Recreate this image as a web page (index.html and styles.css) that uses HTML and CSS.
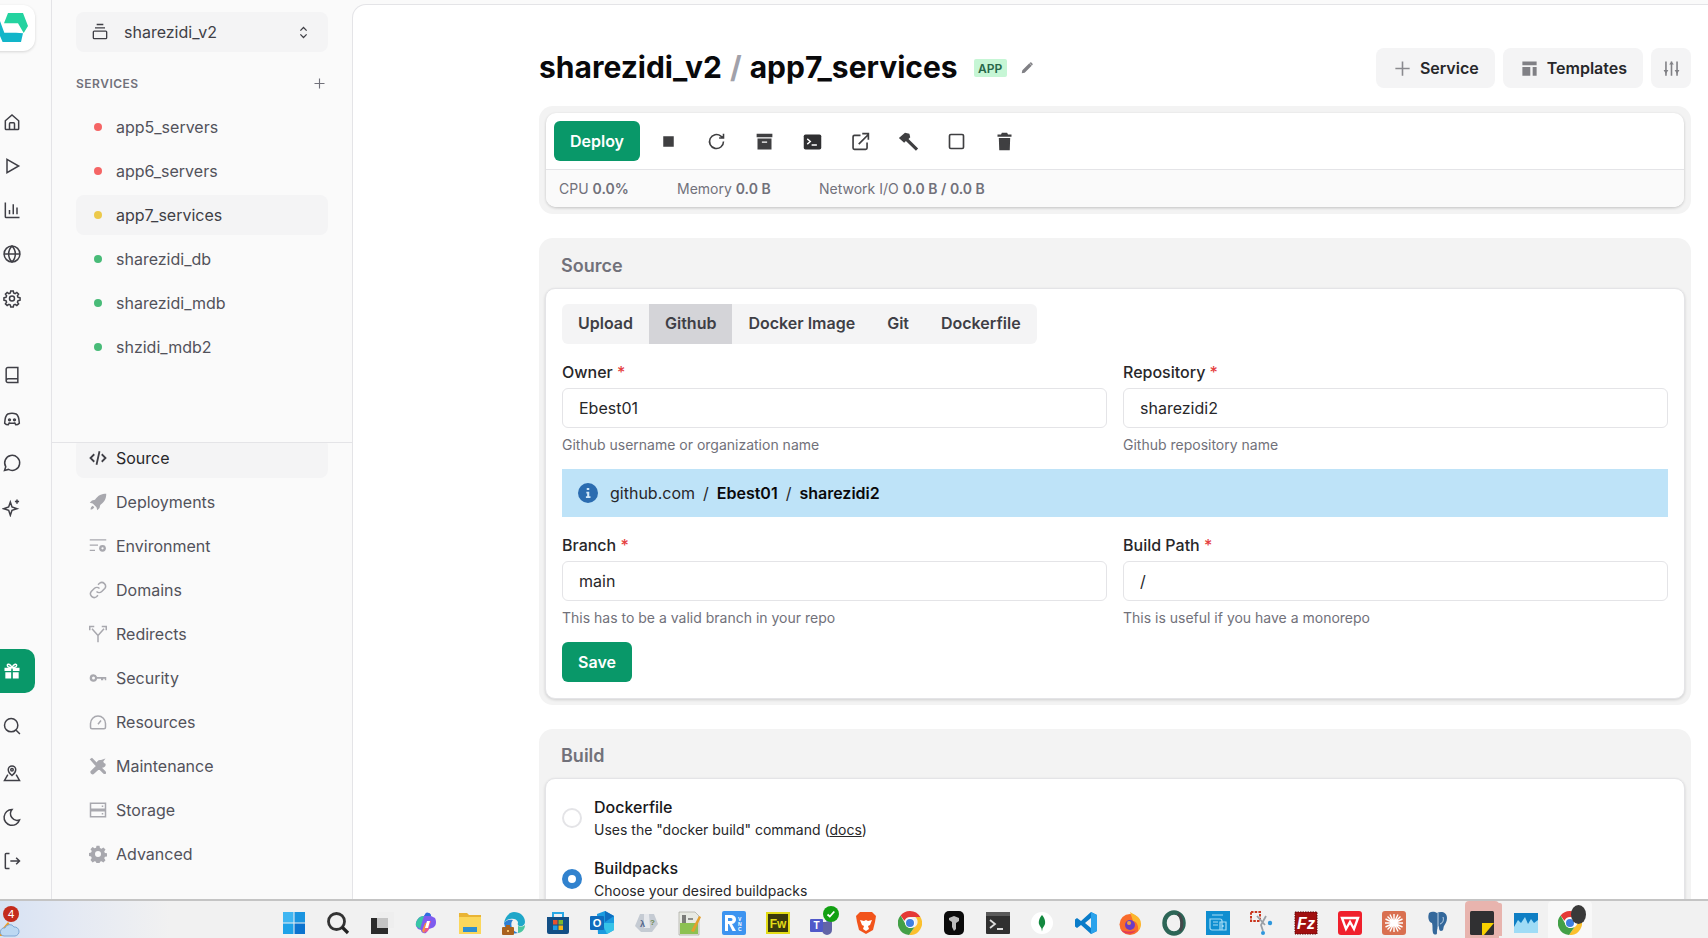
FILE: index.html
```html
<!DOCTYPE html>
<html lang="en">
<head>
    <meta charset="UTF-8">
    <meta name="viewport" content="width=device-width, initial-scale=1.0">
    <title>app7_services</title>
    <link rel="stylesheet" href="styles.css">
</head>
<body>
    <svg class="defs" width="0" height="0">
        <symbol id="chrome" viewBox="0 0 24 24">
            <path d="M12 0a12 12 0 0 1 10.4 6H12a6 6 0 0 0-5.6 3.8L2.6 4.4A12 12 0 0 1 12 0z" fill="#e53935"/>
            <path d="M22.4 6A12 12 0 0 1 11 24l5.6-8a6 6 0 0 0 .6-10z" fill="#fbc02d"/>
            <path d="M2.6 4.4l5.2 9.4a6 6 0 0 0 8.800 2.200L11 24A12 12 0 0 1 2.600 4.400z" fill="#43a047"/>
            <circle cx="12" cy="12" r="5" fill="#fff"/>
            <circle cx="12" cy="12" r="4" fill="#3f7fe0"/>
        </symbol>
    </svg>
    <div class="shell">
        <nav class="rail">
            <div class="logo">
                <svg width="33" height="30" viewBox="0 0 33 30">
                    <path d="M13 0h15l5 13-4.300 7L23 10.300H9z" fill="#24d3a0"/>
                    <path d="M1 14l4-6 4.300 11.700H21l7 .6L26 29H7.600z" fill="#12b5c9"/>
                </svg>
            </div>
            <div class="rail-group">
                <span class="rail-icon"><svg viewBox="0 0 24 24"><path d="M4 10.500 12 3.500l8 7V20a1 1 0 0 1-1 1H5a1 1 0 0 1-1-1z"/><path d="M9 21v-7a1 1 0 0 1 1-1h4a1 1 0 0 1 1 1v7"/></svg></span>
                <span class="rail-icon"><svg viewBox="0 0 24 24"><path d="M6 4l14 8-14 8z"/></svg></span>
                <span class="rail-icon"><svg viewBox="0 0 24 24"><path d="M4 3v17a1 1 0 0 0 1 1h16M9 17v-5M13.500 17V5M18 17V9"/></svg></span>
                <span class="rail-icon"><svg viewBox="0 0 24 24"><circle cx="12" cy="12" r="9.500"/><path d="M2.500 12h19M12 2.500c3 2.800 4 6 4 9.500s-1 6.700-4 9.500c-3-2.800-4-6-4-9.500s1-6.700 4-9.500z"/></svg></span>
                <span class="rail-icon"><svg viewBox="0 0 24 24"><path d="M10.500 3.500h3l.5 2.500 1.700.7 2.100-1.400 2.100 2.100-1.400 2.100.7 1.700 2.500.5v3l-2.500.5-.7 1.700 1.400 2.100-2.100 2.100-2.100-1.400-1.700.7-.5 2.500h-3l-.5-2.500-1.700-.7-2.100 1.400-2.100-2.100 1.400-2.100-.7-1.700-2.500-.5v-3l2.500-.5.700-1.700-1.400-2.100 2.100-2.100 2.100 1.400 1.700-.7z"/><circle cx="12" cy="12.500" r="3"/></svg></span>
            </div>
            <div class="rail-group rail-group-second">
                <span class="rail-icon"><svg viewBox="0 0 24 24"><path d="M5 19V5a2 2 0 0 1 2-2h12v18H7a2 2 0 0 1-2-2zm0 0a2.500 2.500 0 0 1 2-2.500h12"/></svg></span>
                <span class="rail-icon"><svg viewBox="0 0 24 24"><path d="M7 6c3-1.200 7-1.200 10 0 1.800 1 3.500 6 3.800 11-1 1.200-2.800 2-4.300 2l-1.200-2.300c-2.200.5-4.400.5-6.600 0L7.500 19c-1.500 0-3.300-.8-4.300-2C3.500 12 5.200 7 7 6z"/><circle cx="9" cy="13" r="1.100"/><circle cx="15" cy="13" r="1.100"/></svg></span>
                <span class="rail-icon"><svg viewBox="0 0 24 24"><path d="M3 21l1.500-4.500a9 9 0 1 1 3.300 3.200z"/></svg></span>
                <span class="rail-icon"><svg viewBox="0 0 24 24"><path d="M10 6l2 6 6 2-6 2-2 6-2-6-6-2 6-2z"/><path d="M18 3v5M15.500 5.500h5M4 20h.01"/></svg></span>
            </div>
            <span class="gift">
                <svg viewBox="0 0 24 24" width="20" height="20"><path d="M3 8h8v4H3zM13 8h8v4h-8zM4 13.500h7V21H4zM13 13.500h7V21h-7z" fill="#fff"/><path d="M12 8C10 3 6 3 6.500 5.500S10 8 12 8c2 0 5-.2 5.500-2.500S14 3 12 8z" fill="none" stroke="#fff" stroke-width="1.800"/></svg>
            </span>
            <span class="rail-icon rail-search"><svg viewBox="0 0 24 24"><circle cx="11" cy="11" r="8"/><path d="M17 17l4.500 4.500"/></svg></span>
            <span class="rail-icon rail-tight"><svg viewBox="0 0 24 24"><path d="M12 15c-3-2.500-4.500-4.500-4.500-7a4.500 4.500 0 0 1 9 0c0 2.500-1.500 4.500-4.500 7z"/><circle cx="12" cy="8" r="1.500"/><path d="M7 14l-4 7h18l-4-7"/></svg></span>
            <span class="rail-icon"><svg viewBox="0 0 24 24"><path d="M12 3a9.500 9.500 0 1 0 9 12.500A8 8 0 0 1 12 3z"/></svg></span>
            <span class="rail-icon"><svg viewBox="0 0 24 24"><path d="M9 3H5a1 1 0 0 0-1 1v16a1 1 0 0 0 1 1h4M10 12h11M17 8l4 4-4 4"/></svg></span>
        </nav>

        <aside class="sidebar">
            <div class="sidebar-top">
                <div class="project-select">
                    <svg class="select-icon" viewBox="0 0 24 24"><path d="M8 3h8M6 7h12M5 11h14a1 1 0 0 1 1 1v7a1 1 0 0 1-1 1H5a1 1 0 0 1-1-1v-7a1 1 0 0 1 1-1z"/></svg>
                    <span class="project-name">sharezidi_v2</span>
                    <svg class="select-chevrons" viewBox="0 0 24 24"><path d="M7 9l5-5 5 5M7 15l5 5 5-5"/></svg>
                </div>
                <div class="services-head">
                    <span>SERVICES</span>
                    <svg class="plus" viewBox="0 0 24 24"><path d="M12 4v16M4 12h16"/></svg>
                </div>
                <ul class="service-list">
                    <li class="side-row"><i class="dot dot-red"></i>app5_servers</li>
                    <li class="side-row"><i class="dot dot-red"></i>app6_servers</li>
                    <li class="side-row side-row-active"><i class="dot dot-yellow"></i>app7_services</li>
                    <li class="side-row"><i class="dot dot-green"></i>sharezidi_db</li>
                    <li class="side-row"><i class="dot dot-green"></i>sharezidi_mdb</li>
                    <li class="side-row"><i class="dot dot-green"></i>shzidi_mdb2</li>
                </ul>
            </div>
            <div class="sidebar-menu">
                <ul class="menu-list">
                    <li class="side-row side-row-active menu-source">
                        <svg class="menu-icon menu-icon-dark" viewBox="0 0 24 24"><path d="M7 7l-5 5 5 5M17 7l5 5-5 5M14 3l-4 18" fill="none" stroke="#3f3f46" stroke-width="2.400"/></svg>Source
                    </li>
                    <li class="side-row">
                        <svg class="menu-icon" viewBox="0 0 24 24"><path d="M23 1c-6 0-11 2-15 8l-4 1-3 3 4 1 5 5 1 4 3-3 1-4c6-4 8-9 8-15zM5 17c-2 1-3 3-3 5 2 0 4-1 5-3z"/></svg>Deployments
                    </li>
                    <li class="side-row">
                        <svg class="menu-icon" viewBox="0 0 24 24"><path d="M1 3h22v1.500H1zM1 10h11v1.500H1zM1 17h7v1.500H1z"/><circle cx="18" cy="15" r="4.500"/><circle cx="18" cy="15" r="1.500" fill="#fafafa"/></svg>Environment
                    </li>
                    <li class="side-row">
                        <svg class="menu-icon menu-icon-line" viewBox="0 0 24 24"><path d="M10 14a5 5 0 0 0 7 0l4-4a5 5 0 0 0-7-7l-2 2M14 10a5 5 0 0 0-7 0l-4 4a5 5 0 0 0 7 7l2-2"/></svg>Domains
                    </li>
                    <li class="side-row">
                        <svg class="menu-icon menu-icon-line" viewBox="0 0 24 24"><path d="M12 23v-9L4 5M12 14l8-9M1 7V2h6M17 2h6v5"/></svg>Redirects
                    </li>
                    <li class="side-row">
                        <svg class="menu-icon" viewBox="0 0 24 24"><path d="M6 7a5 5 0 0 1 4.800 3.500H23V15h-2v-2h-2v2h-3v-2h-5.200A5 5 0 1 1 6 7zm0 3a2 2 0 1 0 0 4 2 2 0 0 0 0-4z"/></svg>Security
                    </li>
                    <li class="side-row">
                        <svg class="menu-icon menu-icon-line" viewBox="0 0 24 24"><path d="M4 21h16a2 2 0 0 0 2-2v-5a10 10 0 0 0-20 0v5a2 2 0 0 0 2 2zM12 15l4-5"/></svg>Resources
                    </li>
                    <li class="side-row">
                        <svg class="menu-icon" viewBox="0 0 24 24"><path d="M1 3l3-2 6 6 3 3 9 9c1 1 1 3 0 3.500s-2 .500-3-.500l-9-9-3-3zM22 2l-3 4 1 2 2 1c1 3-2 6-6 5L6 23c-2 1-5-2-4-4l8-8c-1-4 2-8 6-7z"/></svg>Maintenance
                    </li>
                    <li class="side-row">
                        <svg class="menu-icon menu-icon-line" viewBox="0 0 24 24"><path d="M2 3h20v8H2zM2 13h20v8H2zM17 7h2M17 17h2"/></svg>Storage
                    </li>
                    <li class="side-row">
                        <svg class="menu-icon" viewBox="0 0 24 24"><path fill-rule="evenodd" d="M10 1h4l.6 3 2 .9 2.600-1.700 2.800 2.800-1.700 2.600.9 2 3 .6v4l-3 .6-.9 2 1.700 2.600-2.800 2.800-2.600-1.700-2 .9-.6 3h-4l-.6-3-2-.9-2.600 1.700L2 19.900l1.700-2.600-.9-2-3-.6v-4l3-.6.9-2L2 5.500l2.800-2.800 2.600 1.700 2-.9zM12 8a4 4 0 1 0 0 8 4 4 0 0 0 0-8z"/></svg>Advanced
                    </li>
                </ul>
            </div>
        </aside>

        <main class="main">
            <header class="page-head">
                <h1 class="page-title">sharezidi_v2 <span class="slash">/</span> app7_services</h1>
                <span class="badge">APP</span>
                <svg class="pencil" viewBox="0 0 24 24"><path d="M3 21l1-5L16 4l4 4L8 20zM17.500 2.500a1.500 1.500 0 0 1 2 0l2 2a1.500 1.500 0 0 1 0 2l-1 1-4-4z"/></svg>
                <div class="head-actions">
                    <button class="soft-btn">
                        <svg class="soft-icon" viewBox="0 0 24 24"><path d="M12 3v18M3 12h18" fill="none" stroke="#8a8a8f" stroke-width="2"/></svg>Service
                    </button>
                    <button class="soft-btn">
                        <svg class="soft-icon" viewBox="0 0 24 24"><path d="M3 3h18v5H3zM3 10h10v11H3zM16 10h5v11h-5z" fill="#808085"/></svg>Templates
                    </button>
                    <button class="soft-btn soft-btn-square">
                        <svg class="soft-icon" viewBox="0 0 24 24"><path d="M5 3v18M12 3v18M19 3v18" fill="none" stroke="#808085" stroke-width="2"/><path d="M2 14h6l-3 5zM9 7h6l-3-4zM16 14h6l-3 5z" fill="#808085"/></svg>
                    </button>
                </div>
            </header>

            <section class="deploy-panel">
                <div class="deploy-inner">
                    <div class="deploy-bar">
                        <button class="green-btn deploy-btn">Deploy</button>
                        <span class="tool"><svg viewBox="0 0 24 24"><rect x="6" y="6" width="12" height="12" fill="#3f3f41"/></svg></span>
                        <span class="tool"><svg viewBox="0 0 24 24"><path d="M20 12a8 8 0 1 1-3-6.200L20 8M20 3v5h-5" fill="none" stroke="#3f3f41" stroke-width="1.800"/></svg></span>
                        <span class="tool"><svg viewBox="0 0 24 24"><path fill-rule="evenodd" d="M3 3h18v4H3zM4 8.500h16V21H4zM9 12v1.500h6V12z" fill="#3f3f41"/></svg></span>
                        <span class="tool"><svg viewBox="0 0 24 24"><rect x="2" y="4" width="20" height="17" rx="2" fill="#2f2f31"/><path d="M6 9l3.500 3L6 15M11 16h6" fill="none" stroke="#fff" stroke-width="1.600"/></svg></span>
                        <span class="tool"><svg viewBox="0 0 24 24"><path d="M12 5H5a1.500 1.500 0 0 0-1.500 1.500v13A1.500 1.500 0 0 0 5 21h13a1.500 1.500 0 0 0 1.500-1.500V13M10 15L21 4M14 3h7v7" fill="none" stroke="#3f3f41" stroke-width="1.900"/></svg></span>
                        <span class="tool"><svg viewBox="0 0 24 24"><path d="M1 8L8 2l5 1 1 4-2 2L23 20l-2.500 2.500L9 11.500l-2 2z" fill="#3f3f41"/></svg></span>
                        <span class="tool"><svg viewBox="0 0 24 24"><rect x="4" y="4" width="16" height="16" rx="1.500" fill="none" stroke="#3f3f41" stroke-width="1.900"/></svg></span>
                        <span class="tool"><svg viewBox="0 0 24 24"><path d="M9 2h6l1 2h4v2.500H4V4h4zM5.500 8h13L18 22H6z" fill="#3f3f41"/></svg></span>
                    </div>
                    <div class="stats">
                        <span class="stat stat-cpu">CPU <b>0.0%</b></span>
                        <span class="stat stat-mem">Memory <b>0.0 B</b></span>
                        <span class="stat">Network I/O <b>0.0 B / 0.0 B</b></span>
                    </div>
                </div>
            </section>

            <section class="panel">
                <h2 class="panel-title">Source</h2>
                <div class="panel-body">
                    <div class="tabs">
                        <span class="tab">Upload</span>
                        <span class="tab tab-active">Github</span>
                        <span class="tab">Docker Image</span>
                        <span class="tab">Git</span>
                        <span class="tab">Dockerfile</span>
                    </div>
                    <div class="form-grid">
                        <div class="field">
                            <label class="field-label">Owner <em>*</em></label>
                            <input class="field-input" type="text" value="Ebest01">
                            <p class="field-hint">Github username or organization name</p>
                        </div>
                        <div class="field">
                            <label class="field-label">Repository <em>*</em></label>
                            <input class="field-input" type="text" value="sharezidi2">
                            <p class="field-hint">Github repository name</p>
                        </div>
                    </div>
                    <div class="repo-banner">
                        <svg class="info-icon" viewBox="0 0 24 24"><circle cx="12" cy="12" r="12" fill="#2b6cb0"/><path d="M10.500 6h3v2.500h-3zM10 10.500h3.500V16H15v2H9.500v-2H11v-3.500h-1z" fill="#cfe6f8"/></svg>
                        <span>github.com</span><span class="sep">/</span><b>Ebest01</b><span class="sep">/</span><b>sharezidi2</b>
                    </div>
                    <div class="form-grid">
                        <div class="field">
                            <label class="field-label">Branch <em>*</em></label>
                            <input class="field-input" type="text" value="main">
                            <p class="field-hint">This has to be a valid branch in your repo</p>
                        </div>
                        <div class="field">
                            <label class="field-label">Build Path <em>*</em></label>
                            <input class="field-input" type="text" value="/">
                            <p class="field-hint">This is useful if you have a monorepo</p>
                        </div>
                    </div>
                    <button class="green-btn save-btn">Save</button>
                </div>
            </section>

            <section class="panel panel-build">
                <h2 class="panel-title">Build</h2>
                <div class="panel-body">
                    <div class="radio-row">
                        <span class="radio"></span>
                        <div>
                            <div class="radio-title">Dockerfile</div>
                            <div class="radio-desc">Uses the "docker build" command (<u>docs</u>)</div>
                        </div>
                    </div>
                    <div class="radio-row">
                        <span class="radio radio-on"></span>
                        <div>
                            <div class="radio-title">Buildpacks</div>
                            <div class="radio-desc">Choose your desired buildpacks</div>
                        </div>
                    </div>
                </div>
            </section>
        </main>
    </div>

    <footer class="taskbar">
        <div class="weather">
            <svg viewBox="0 0 24 24" width="24" height="24"><path d="M-4 22L8 8l3 4-7 10z" fill="#f29c1f"/><path d="M4 22a4 4 0 0 1 1-8 5 5 0 0 1 9-1 4.500 4.500 0 0 1 1 9z" fill="#bcd8f2" stroke="#7ea9d6"/></svg>
            <span class="weather-badge">4</span>
        </div>
        <div class="task-icons">
            <span class="task"><svg viewBox="0 0 24 24"><path d="M1 1h10.500v10.500H1z" fill="#3fb6f2"/><path d="M12.500 1H23v10.500H12.500z" fill="#1b95e0"/><path d="M1 12.500h10.500V23H1z" fill="#1ea2e8"/><path d="M12.500 12.500H23V23H12.500z" fill="#0c74cf"/></svg></span>
            <span class="task"><svg viewBox="0 0 24 24"><circle cx="10.500" cy="10.500" r="8" fill="none" stroke="#333" stroke-width="2.800"/><path d="M16 16l6 6" stroke="#222" stroke-width="3.200"/></svg></span>
            <span class="task"><svg viewBox="0 0 24 24"><rect x="1" y="7" width="17" height="16" fill="#2b2b2b"/><rect x="7" y="1" width="17" height="16" fill="#eeeeee"/><rect x="7" y="7" width="11" height="10" fill="#c4c4c4"/></svg></span>
            <span class="task"><svg viewBox="0 0 24 24"><path d="M2 15c-1-5 3-10 8-10l2-3c3-1 5 1 5 3l4 2c2 4 1 9-3 10l-3 1-3 4c-3 1-5-1-5-3l-3-1z" fill="#7e5bef"/><path d="M2 15c-1-5 3-10 8-10l-4 13z" fill="#38c6a5"/><path d="M12 2c3-1 5 1 5 3h-7z" fill="#2d6cdf"/><path d="M10 22l3-12h4l-3 10z" fill="#f0568d"/><path d="M8 20l3-8h2l-3 10z" fill="#f59342"/><path d="M13 10h3l-2 7h-3z" fill="#fff"/></svg></span>
            <span class="task"><svg viewBox="0 0 24 24"><path d="M1 2h8l2 2h12v19H1z" fill="#e9b435"/><path d="M1 6h22v17H1z" fill="#fbd75b"/><rect x="5" y="16" width="14" height="5" fill="#2e8ed0"/></svg></span>
            <span class="task"><svg viewBox="0 0 24 24"><path d="M12 1c6 0 11 4 11 10 0 3-3 5-6 4-2-1-1-3-1-4-1-3-5-4-8-3-3 0-5 3-6 4C3 6 7 1 12 1z" fill="#1fa7c9"/><path d="M2 12c2-3 6-4 9-3-2 2-2 5-1 8 1 2 3 4 6 5-7 2-13-3-14-10z" fill="#2d7fd3"/><path d="M16 15c2 1 5 1 7-1 0 4-3 8-7 8z" fill="#4bc6a0"/><rect x="0" y="16" width="12" height="8" rx="1" fill="#a9621f"/><rect x="4" y="14" width="4" height="2" fill="#a9621f"/><rect x="5" y="19" width="2" height="2" fill="#f6c26b"/></svg></span>
            <span class="task"><svg viewBox="0 0 24 24"><path d="M1 6h22v15a2 2 0 0 1-2 2H3a2 2 0 0 1-2-2z" fill="#134f85"/><path d="M7 6V2h10v4" fill="none" stroke="#29a9e6" stroke-width="2"/><rect x="7" y="9" width="4.500" height="4.500" fill="#e8512d"/><rect x="12.500" y="9" width="4.500" height="4.500" fill="#7cb82f"/><rect x="7" y="14.500" width="4.500" height="4.500" fill="#1c9be6"/><rect x="12.500" y="14.500" width="4.500" height="4.500" fill="#f7b614"/></svg></span>
            <span class="task"><svg viewBox="0 0 24 24"><path d="M7 3l8-3 9 5v14l-7 4H8z" fill="#1a9be0"/><path d="M15 0l9 5-9 6z" fill="#0f6fc0"/><path d="M12 12h12v7l-7 4z" fill="#36c3e8"/><rect x="0" y="5" width="14" height="14" rx="1" fill="#0f6cbd"/><text x="7" y="16" class="task-text" font-size="11" fill="#fff" text-anchor="middle">O</text></svg></span>
            <span class="task"><svg viewBox="0 0 24 24"><path d="M1 15L6 3h14l4 10-6 8H7z" fill="#c5cbd3"/><path d="M10 3h5l1 14h-6z" fill="#e6e8ec"/><text x="6" y="16" class="task-text" font-size="9" fill="#51648c">λ</text><text x="16" y="14" class="task-text" font-size="8" fill="#6c8a50">?</text></svg></span>
            <span class="task"><svg viewBox="0 0 24 24"><path d="M1 1h16l4 4v19H1z" fill="#e8eae3" stroke="#9a9a90" stroke-width=".6"/><rect x="2" y="12" width="18" height="11" fill="#8cc152"/><path d="M5 4v8M7 4v8M10 8h5" stroke="#333" stroke-width="1.200"/><path d="M13 20l8-15 2 1-7 15z" fill="#e4a02c"/></svg></span>
            <span class="task"><svg viewBox="0 0 24 24"><rect width="24" height="24" rx="2" fill="#3d94f0"/><path d="M3 4h6a4.500 4.500 0 0 1 1 9l4 7h-3.500L7 13H6v7H3zM6 7v3h3a1.500 1.500 0 0 0 0-3z" fill="#fff"/><text x="16" y="10" class="task-text" font-size="5" fill="#fff">V</text><text x="16" y="15" class="task-text" font-size="5" fill="#fff">N</text><text x="16" y="20" class="task-text" font-size="5" fill="#fff">C</text></svg></span>
            <span class="task"><svg viewBox="0 0 24 24"><rect x="1" y="2" width="22" height="20" fill="#3a3a0c" stroke="#e3dc17" stroke-width="2"/><text x="12" y="17" class="task-text" font-size="12" fill="#e3dc17" text-anchor="middle">Fw</text></svg></span>
            <span class="task"><svg viewBox="0 0 24 24"><circle cx="19" cy="9" r="3" fill="#7479dc"/><path d="M8 11h14v8a5 5 0 0 1-10 0z" fill="#6264a7"/><rect x="0" y="8" width="13" height="13" rx="1" fill="#5059c9"/><text x="6.500" y="18" class="task-text" font-size="10" fill="#fff" text-anchor="middle">T</text></svg><i class="teams-check"><svg viewBox="0 0 16 16"><circle cx="8" cy="8" r="8" fill="#12a012"/><path d="M4.500 8.500l2.300 2 4.500-5" fill="none" stroke="#fff" stroke-width="1.800"/></svg></i></span>
            <span class="task"><svg viewBox="0 0 24 24"><path d="M6 1h12l4 4-1 6-2 8-7 4-7-4-2-8-1-6z" fill="#f2541b"/><path d="M6 9l4 1 2-1 2 1 4-1-2 5-2 1 1 3-3 2-3-2 1-3-2-1z" fill="#fff"/></svg></span>
            <span class="task"><svg viewBox="0 0 24 24"><use href="#chrome"/></svg></span>
            <span class="task"><svg viewBox="0 0 24 24"><rect x="2" width="20" height="24" rx="5" fill="#0b0b0b"/><path d="M7 7l5-2 5 2v3l-3 2v6l-2 2-2-4V11L7 9z" fill="#bdbdbd"/></svg></span>
            <span class="task"><svg viewBox="0 0 24 24"><rect y="1" width="24" height="22" rx="1" fill="#303030"/><rect y="1" width="24" height="4" fill="#5a5a5a"/><path d="M4 9l5 4-5 4" fill="none" stroke="#ddd" stroke-width="1.800"/><path d="M11 18h6" stroke="#eee" stroke-width="1.800"/></svg></span>
            <span class="task"><svg viewBox="0 0 24 24"><circle cx="12" cy="12" r="11" fill="#fff"/><path d="M12 4c3 3 3.500 7 3 9-.5 2-2 3-2.500 4.500l-.5 3-.5-3C11 16 9.500 15 9 13c-.5-2 0-6 3-9z" fill="#13883f"/></svg></span>
            <span class="task"><svg viewBox="0 0 24 24"><path d="M17 1l6 3v16l-6 3L7 14l-4 3-2-1.500v-7L3 7l4 3z" fill="#0a7cc9"/><path d="M17 1l6 3v16l-6 3z" fill="#2ba3ec"/><path d="M17 7v10l-6-5z" fill="#f2f2f2"/></svg></span>
            <span class="task"><svg viewBox="0 0 24 24"><circle cx="12" cy="13.500" r="10.500" fill="#f96b2c"/><path d="M12 1c4 3 11 4 11 12 0 3-1 5-3 7 1-6-2-10-5-10z" fill="#fcb62c"/><path d="M3 19c5 6 13 4 15 0-3 2-9 2-15 0z" fill="#e0395a"/><circle cx="12" cy="14" r="5" fill="#6b3cc4"/><circle cx="11" cy="12" r="2" fill="#f0a03c"/></svg></span>
            <span class="task"><svg viewBox="0 0 24 24"><ellipse cx="12" cy="12" rx="9.500" ry="10.500" fill="none" stroke="#2d6657" stroke-width="4.500"/><path d="M16 3c4 3 5 12 2 17" fill="none" stroke="#44484a" stroke-width="3"/></svg></span>
            <span class="task"><svg viewBox="0 0 24 24"><rect width="24" height="24" fill="#0f8ed0"/><path d="M6 4h11M4 8h10a2 2 0 0 1 2 2v9H6a2 2 0 0 1-2-2zM14 11h6v8h-6zM7 11h5M7 14h5M17 14v2" fill="none" stroke="#a6dcf5" stroke-width="1.200"/></svg></span>
            <span class="task"><svg viewBox="0 0 24 24"><path d="M1 1h9v9H1z" fill="none" stroke="#c9361e" stroke-width="2" stroke-dasharray="2.500 1.200"/><path d="M7 5l8 9M16 5l-5 9 2 6" fill="none" stroke="#9aa0a6" stroke-width="1.800"/><circle cx="20" cy="12" r="2.200" fill="#2f97dc"/><circle cx="13" cy="22" r="2" fill="#2f97dc"/></svg></span>
            <span class="task"><svg viewBox="0 0 24 24"><rect x="1" y="1" width="22" height="22" fill="#a01010" stroke="#5e0606" stroke-dasharray="1.500 1"/><text x="12" y="18" class="task-text task-text-italic" font-size="16" fill="#fff" text-anchor="middle">Fz</text></svg></span>
            <span class="task"><svg viewBox="0 0 24 24"><rect width="24" height="24" rx="3" fill="#f0202c"/><path d="M4 7h16l-4 11-4-7-4 7z" fill="none" stroke="#fff" stroke-width="2.400"/></svg></span>
            <span class="task"><svg viewBox="0 0 24 24"><rect width="24" height="24" rx="3" fill="#d97050"/><path d="M12 3v18M3 12h18M5.500 5.500l13 13M18.500 5.500l-13 13M8 3.500l8 17M16 3.500l-8 17M3.500 8l17 8M20.500 8l-17 8" stroke="#fff" stroke-width="1.400"/></svg></span>
            <span class="task"><svg viewBox="0 0 24 24"><path d="M3 2c3-2 6-1 8 0 4-2 10-1 10 5 0 4-2 6-3 8-1 2 0 5-3 5-2 0-2-3-2-5-2 1-2 5-2 7 0 2-3 2-4 0-1-3 0-7-1-10-2 0-5-4-3-10z" fill="#34689b"/><path d="M12 2v15M17 6c1 3 0 6-3 7" fill="none" stroke="#cfe0ef" stroke-width=".9"/></svg></span>
            <span class="task task-active"><svg viewBox="0 0 24 24"><rect width="24" height="24" rx="1.500" fill="#303032"/><path d="M12 12h12L14 24h-2z" fill="#f8d000"/></svg></span>
            <span class="task"><svg viewBox="0 0 24 24"><rect y="2" width="24" height="20" fill="#0f7fc4"/><path d="M0 16l4-7 3 3 4-6 3 7 3-5 3 4 4-3v13H0z" fill="#9fdcf6"/></svg></span>
            <span class="task task-open"><svg viewBox="0 0 24 24"><use href="#chrome"/></svg><i class="chrome-overlay"></i></span>
        </div>
    </footer>
</body>
</html>
```

FILE: styles.css
```css
* {
    box-sizing: border-box;
}
html, body {
    margin: 0;
    height: 938px;
    overflow: hidden;
}
body {
    font-family: Inter, "Liberation Sans", sans-serif;
    background-color: #fafafa;
    color: #27272a;
    font-size: 16px;
}
ul {
    list-style: none;
    margin: 0;
    padding: 0;
}
.defs {
    display: block;
    height: 0;
}
.shell {
    display: flex;
    height: 899px;
    overflow: hidden;
}

/* left icon rail */
.rail {
    width: 52px;
    flex: none;
    border-right: 1px solid #e4e4e7;
    padding-top: 5px;
    display: flex;
    flex-direction: column;
    align-items: flex-start;
}
.logo {
    width: 47px;
    height: 46px;
    margin-left: -12px;
    background-color: white;
    border-radius: 12px;
    box-shadow: 0 1px 3px rgba(0,0,0,0.15);
    display: flex;
    align-items: center;
    justify-content: center;
    flex: none;
}
.rail-group {
    margin-top: 49px;
    display: flex;
    flex-direction: column;
}
.rail-group-second {
    margin-top: 33px;
}
.rail-icon {
    width: 24px;
    height: 44px;
    display: flex;
    align-items: center;
    justify-content: center;
    flex: none;
}
.rail-icon svg {
    width: 20px;
    height: 20px;
    fill: none;
    stroke: #3f3f46;
    stroke-width: 1.800;
}
.gift {
    width: 35px;
    height: 44px;
    margin-top: 120px;
    padding-left: 2px;
    background-color: #099869;
    border-radius: 0 10px 10px 0;
    display: flex;
    align-items: center;
    flex: none;
}
.rail-search {
    margin-top: 11px;
}
.rail-tight {
    margin-top: 3px;
}

/* sidebar */
.sidebar {
    width: 300px;
    flex: none;
    display: flex;
    flex-direction: column;
}
.sidebar-top {
    height: 443px;
    flex: none;
    border-bottom: 1px solid #e4e4e7;
    padding: 12px 24px 0;
}
.project-select {
    height: 40px;
    border-radius: 8px;
    background-color: #f4f4f5;
    display: flex;
    align-items: center;
    padding-left: 14px;
    color: #3f3f46;
}
.select-icon {
    width: 20px;
    height: 20px;
    fill: none;
    stroke: #3f3f46;
    stroke-width: 1.600;
}
.project-name {
    margin-left: 14px;
    flex: 1;
}
.select-chevrons {
    width: 15px;
    height: 15px;
    margin-right: 17px;
    fill: none;
    stroke: #3f3f46;
    stroke-width: 2;
}
.services-head {
    margin-top: 22px;
    height: 18px;
    display: flex;
    align-items: center;
    justify-content: space-between;
    font-size: 12px;
    font-weight: 600;
    letter-spacing: 0.5px;
    color: #71717a;
}
.plus {
    width: 15px;
    height: 15px;
    margin-right: 1px;
    fill: none;
    stroke: #71717a;
    stroke-width: 1.800;
}
.service-list {
    margin-top: 15px;
}
.side-row {
    height: 40px;
    margin-bottom: 4px;
    border-radius: 8px;
    display: flex;
    align-items: center;
    padding-left: 18px;
    color: #52525b;
    white-space: nowrap;
}
.side-row-active {
    background-color: #f4f4f5;
    color: #3f3f46;
}
.dot {
    width: 8px;
    height: 8px;
    border-radius: 50%;
    margin-right: 14px;
}
.dot-red {
    background-color: #f56565;
}
.dot-yellow {
    background-color: #ecc94b;
}
.dot-green {
    background-color: #48bb78;
}
.sidebar-menu {
    flex: 1;
    overflow: hidden;
    padding: 0 24px;
}
.menu-list {
    margin-top: -5px;
}
.menu-list .side-row {
    padding-left: 13px;
}
.menu-source {
    color: #27272a;
}
.menu-icon {
    width: 18px;
    height: 18px;
    margin-right: 9px;
    flex: none;
    fill: #a8a8ae;
}
.menu-icon-dark {
    fill: none;
}
.menu-icon-line {
    fill: none;
    stroke: #a8a8ae;
    stroke-width: 2;
}

/* main column */
.main {
    flex: 1;
    min-width: 0;
    margin-top: 4px;
    padding: 43px 17px 0 186px;
    background-color: white;
    border-left: 1px solid #e4e4e7;
    border-top: 1px solid #e4e4e7;
    border-top-left-radius: 14px;
}
.page-head {
    height: 40px;
    display: flex;
    align-items: center;
}
.page-title {
    margin: 0;
    padding-bottom: 2px;
    font-size: 30px;
    font-weight: 700;
    color: #09090b;
    white-space: nowrap;
}
.slash {
    color: #a1a1aa;
    margin: 0 1px;
}
.badge {
    margin-left: 16px;
    width: 33px;
    height: 18px;
    border-radius: 2px;
    background-color: #c6f6d5;
    color: #276749;
    font-size: 12px;
    font-weight: 600;
    display: flex;
    align-items: center;
    justify-content: center;
}
.pencil {
    width: 14px;
    height: 14px;
    margin-left: 13px;
    fill: #808085;
}
.head-actions {
    margin-left: auto;
    display: flex;
    gap: 8px;
}
.soft-btn {
    height: 40px;
    border: none;
    border-radius: 8px;
    background-color: #f4f4f5;
    padding: 0 16px 0 17px;
    font-family: inherit;
    font-size: 16px;
    font-weight: 600;
    color: #27272a;
    display: flex;
    align-items: center;
    gap: 8px;
}
.soft-icon {
    width: 19px;
    height: 19px;
}
.soft-btn-square {
    width: 40px;
    padding: 0;
    justify-content: center;
}
.deploy-panel {
    margin-top: 18px;
    padding: 7px;
    background-color: #f3f3f3;
    border-radius: 14px;
}
.deploy-inner {
    background-color: white;
    border-radius: 10px;
    box-shadow: 0 1px 3px rgba(0,0,0,0.2);
    overflow: hidden;
}
.deploy-bar {
    height: 57px;
    display: flex;
    align-items: center;
    padding-left: 8px;
    border-bottom: 1px solid #e4e4e7;
}
.green-btn {
    height: 40px;
    border: none;
    border-radius: 6px;
    background-color: #099869;
    color: white;
    font-family: inherit;
    font-size: 16px;
    font-weight: 600;
}
.deploy-btn {
    width: 86px;
    margin-right: 4px;
}
.tool {
    width: 48px;
    height: 40px;
    display: flex;
    align-items: center;
    justify-content: center;
}
.tool svg {
    width: 21px;
    height: 21px;
}
.stats {
    height: 37px;
    display: flex;
    align-items: center;
    padding-left: 13px;
    background-color: #fafafa;
    font-size: 14px;
    color: #71717a;
}
.stat b {
    font-weight: 600;
}
.stat-cpu {
    width: 118px;
}
.stat-mem {
    width: 142px;
}

/* form sections */
.panel {
    margin-top: 24px;
    padding: 0 6px 6px;
    background-color: #f3f3f3;
    border-radius: 14px;
}
.panel-title {
    margin: 0;
    height: 50px;
    padding: 16px 0 0 16px;
    font-size: 18px;
    line-height: 24px;
    font-weight: 600;
    color: #71717a;
}
.panel-build .panel-title {
    height: 49px;
    padding-top: 15px;
}
.panel-body {
    background-color: white;
    border: 1px solid #e4e4e7;
    border-radius: 10px;
    box-shadow: 0 1px 3px rgba(0,0,0,0.15);
    padding: 15px 16px 16px;
}
.panel-build .panel-body {
    padding-top: 16px;
}
.tabs {
    display: inline-flex;
    height: 40px;
    border-radius: 6px;
    background-color: #f4f4f5;
    overflow: hidden;
    vertical-align: top;
}
.tab {
    padding: 0 16px;
    line-height: 39px;
    font-weight: 600;
    color: #3f3f46;
}
.tab-active {
    background-color: #d4d4d8;
}
.form-grid {
    display: grid;
    grid-template-columns: 1fr 1fr;
    gap: 16px;
    margin-top: 16px;
}
.field-label {
    display: block;
    line-height: 24px;
    margin-bottom: 4px;
    font-weight: 500;
    color: #27272a;
}
.field-label em {
    color: #e53e3e;
    font-style: normal;
}
.field-input {
    display: block;
    width: 100%;
    height: 40px;
    padding: 0 16px;
    border: 1px solid #e4e4e7;
    border-radius: 6px;
    background-color: white;
    font-family: inherit;
    font-size: 16px;
    color: #27272a;
}
.field-hint {
    margin: 7px 0 0;
    font-size: 14px;
    line-height: 20px;
    color: #71717a;
}
.repo-banner {
    margin-top: 14px;
    height: 48px;
    padding-left: 16px;
    background-color: #bee3f8;
    display: flex;
    align-items: center;
    color: #27272a;
}
.repo-banner b {
    font-weight: 600;
    color: #09090b;
}
.info-icon {
    width: 20px;
    height: 20px;
    margin-right: 12px;
}
.sep {
    margin: 0 8px;
}
.save-btn {
    display: block;
    width: 70px;
    margin-top: 14px;
}
.radio-row {
    display: flex;
    align-items: center;
    margin-bottom: 16px;
}
.radio {
    width: 20px;
    height: 20px;
    flex: none;
    margin-right: 12px;
    border: 2px solid #e4e4e7;
    border-radius: 50%;
    background-color: white;
}
.radio-on {
    border: 6px solid #3182ce;
}
.radio-title {
    line-height: 24px;
    font-weight: 500;
    color: #18181b;
}
.radio-desc {
    font-size: 14px;
    line-height: 20px;
    margin-top: 1px;
    color: #27272a;
}

/* windows taskbar */
.taskbar {
    height: 39px;
    display: flex;
    border-top: 2px solid #c4c4c4;
    background: linear-gradient(90deg, #d7e2f3 0, #e4e9f3 70px, #f1f1f1 170px);
}
.weather {
    width: 24px;
    height: 37px;
    position: relative;
    padding-top: 13px;
    flex: none;
}
.weather-badge {
    position: absolute;
    left: 3px;
    top: 5px;
    width: 16px;
    height: 16px;
    border-radius: 50%;
    background-color: #c42b1c;
    color: white;
    font-size: 11px;
    line-height: 16px;
    text-align: center;
}
.task-icons {
    margin-left: 248px;
    display: flex;
}
.task {
    width: 44px;
    height: 37px;
    padding-top: 10px;
    display: flex;
    justify-content: center;
    position: relative;
}
.task > svg {
    width: 24px;
    height: 24px;
    overflow: visible;
}
.task-text {
    font-family: "Liberation Sans", sans-serif;
    font-weight: 700;
}
.task-text-italic {
    font-style: italic;
}
.task-active {
    background-color: #e8b4ae;
    border-radius: 4px 4px 0 0;
    width: 34px;
    margin: 0 5px;
    box-shadow: 5px 0 0 -2px #e8b4ae;
}
.task-open {
    background-color: #f8f8f8;
    border-radius: 4px 4px 0 0;
}
.teams-check {
    position: absolute;
    left: 23px;
    top: 5px;
    width: 16px;
    height: 16px;
}
.chrome-overlay {
    position: absolute;
    left: 23px;
    top: 4px;
    width: 15px;
    height: 19px;
    border-radius: 50%;
    background-color: #3a3a3a;
}
```
